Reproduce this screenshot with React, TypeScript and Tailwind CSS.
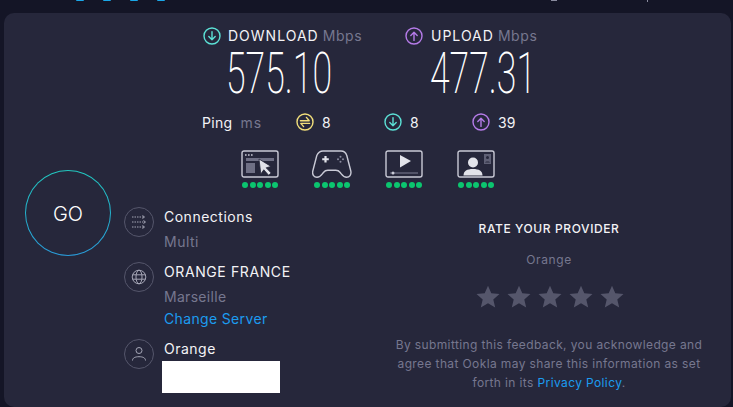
const font = "[font-family:Inter,'Noto_Sans',sans-serif]";

function ArrowBadge({ kind }: { kind: 'down' | 'up' | 'ping' }) {
  const color = kind === 'down' ? '#5ce1d6' : kind === 'up' ? '#b57be8' : '#f2df7b';
  return (
    <svg width="18" height="18" viewBox="0 0 18 18" fill="none" stroke={color} strokeWidth="1.4" strokeLinecap="round" strokeLinejoin="round" className="shrink-0">
      <circle cx="9" cy="9" r="8" />
      {kind === 'down' && <path d="M9 4.600v8.200M5.800 9.600 9 12.800l3.200-3.200" />}
      {kind === 'up' && <path d="M9 13.400V5.200M5.800 8.400 9 5.200l3.200 3.200" />}
      {kind === 'ping' && <path d="M4.400 7.800h8.800L10.400 4.400M13.600 10.400H4.800L7.600 13.600" />}
    </svg>
  );
}

function BrowsingIcon() {
  return (
    <svg width="38" height="28" viewBox="0 0 38 28" fill="none">
      <rect x="1" y="1" width="36" height="26" rx="2" stroke="#c9cad6" strokeWidth="1.4" />
      <path d="M4 5h1.600M7 5h1.600M10 5h1.600" stroke="#c9cad6" strokeWidth="1.600" />
      <rect x="5" y="8" width="28" height="3" fill="#6f7085" />
      <rect x="5" y="13" width="9" height="10" fill="#6f7085" />
      <path d="M18 9l12 7.400-4.800 1.400 5 5.200-2.600 2.200-4.800-5.400-3 4.200z" fill="#e2e3ea" stroke="#26273b" strokeWidth="0.8" />
    </svg>
  );
}

function GamingIcon() {
  return (
    <svg width="40" height="28" viewBox="0 0 40 28" fill="none">
      <path d="M11 1h18c3 0 4.800 1.500 5.800 4.500l4 15.500c.8 3.700-1.300 6.300-4.200 6.300-3.200 0-4.600-2.600-6.400-4.800-1.200-1.500-2.400-2.200-4.400-2.200h-8c-2 0-3.200.7-4.400 2.200-1.800 2.200-3.200 4.800-6.400 4.800-2.900 0-5-2.600-4.200-6.300l4-15.500C6.200 2.500 8 1 11 1z" stroke="#c9cad6" strokeWidth="1.400" />
      <path d="M13.500 6v6.500M10.200 9.250h6.600" stroke="#e2e3ea" strokeWidth="2.200" />
      <circle cx="28.500" cy="6.700" r="1" fill="#8a8b9e" />
      <circle cx="28.500" cy="11.700" r="1" fill="#8a8b9e" />
      <circle cx="26" cy="9.200" r="1" fill="#8a8b9e" />
      <circle cx="31" cy="9.200" r="1" fill="#8a8b9e" />
    </svg>
  );
}

function StreamingIcon() {
  return (
    <svg width="38" height="28" viewBox="0 0 38 28" fill="none">
      <rect x="1" y="1" width="36" height="26" rx="2" stroke="#c9cad6" strokeWidth="1.400" />
      <path d="M15 5l11 6-11 6.500z" fill="#e2e3ea" />
      <path d="M5 23h28" stroke="#6f7085" strokeWidth="1.200" />
      <circle cx="8" cy="23" r="1.500" fill="#c9cad6" />
    </svg>
  );
}

function VideoCallIcon() {
  return (
    <svg width="38" height="28" viewBox="0 0 38 28" fill="none">
      <rect x="1" y="1" width="36" height="26" rx="2" stroke="#c9cad6" strokeWidth="1.400" />
      <circle cx="16" cy="12.500" r="5" fill="#e2e3ea" />
      <path d="M6.500 25.500c0-4.500 3.500-6.500 9.500-6.500s9.500 2 9.500 6.500z" fill="#e2e3ea" />
      <rect x="27" y="4" width="7" height="10" fill="#5f6075" />
      <circle cx="30.500" cy="7.500" r="1.500" fill="#26273b" />
      <path d="M28 12.500c0-1.500 5-1.500 5 0z" fill="#26273b" />
    </svg>
  );
}

function Quality({ children, width }: { children: React.ReactNode; width: string }) {
  return (
    <div className={`flex flex-col items-center gap-[4px] ${width}`}>
      {children}
      <div className="flex gap-[1.5px]">
        {[0, 1, 2, 3, 4].map((i) => (
          <span key={i} className="h-[6px] w-[6px] rounded-full bg-[#0bc56f]"></span>
        ))}
      </div>
    </div>
  );
}

function Metric({ kind, label, value, gap, labelGap, valuePad }: { kind: 'down' | 'up'; label: string; value: string; gap: string; labelGap: string; valuePad: string }) {
  return (
    <div className={gap}>
      <div className="flex h-[18px] items-center text-[14px] leading-[18px]">
        <ArrowBadge kind={kind} />
        <span className={`${labelGap} tracking-[1px] text-[#f3f3f6]`}>{label}</span>
        <span className="ml-[4px] tracking-[0.6px] text-[#76778f]">Mbps</span>
      </div>
      <div className={`mt-[3px] h-[52px] leading-[52px] ${valuePad}`}>
        <span className="inline-block origin-left scale-x-[0.625] whitespace-nowrap text-[57px] font-extralight text-white [font-family:Roboto,sans-serif]">{value}</span>
      </div>
    </div>
  );
}

function PingValue({ kind, value }: { kind: 'down' | 'up' | 'ping'; value: string }) {
  return (
    <div className="flex w-[88px] items-center text-[14px] text-[#f3f3f6]">
      <ArrowBadge kind={kind} />
      <span className="ml-[8px]">{value}</span>
    </div>
  );
}

function InfoIcon({ kind }: { kind: 'connections' | 'globe' | 'user' }) {
  return (
    <span className="flex h-[30px] w-[30px] shrink-0 items-center justify-center rounded-full border border-[#55566b]">
      <svg width="16" height="16" viewBox="0 0 16 16" fill="none" stroke="#a5a6b6" strokeWidth="1">
        {kind === 'connections' && (
          <>
            <path d="M1 3h12M1 8h13M1 13h12" strokeDasharray="1.500 1" />
            <path d="M11.500 1.500 13.500 3l-2 1.500M12.500 6.500 14.500 8l-2 1.500M11.500 11.500l2 1.500-2 1.500" />
          </>
        )}
        {kind === 'globe' && (
          <>
            <circle cx="8" cy="8" r="6.800" />
            <ellipse cx="8" cy="8" rx="3" ry="6.800" />
            <path d="M1.500 5.800h13M1.500 10.200h13" />
          </>
        )}
        {kind === 'user' && (
          <>
            <circle cx="8" cy="4.500" r="3" />
            <path d="M1.500 14.500c0-2.500 2.500-3.800 6.500-3.800s6.500 1.300 6.500 3.800" />
          </>
        )}
      </svg>
    </span>
  );
}

function Star() {
  return (
    <svg width="24" height="24" viewBox="0 0 24 24" fill="#55566b">
      <path d="M12 .8l3.300 7.500 8.200.8-6.200 5.400 1.900 8-7.200-4.200-7.200 4.200 1.900-8L.5 9.100l8.200-.8z" />
    </svg>
  );
}

export default function App() {
  return (
    <div className={`h-[407px] w-[733px] overflow-hidden bg-[#141526] ${font}`}>
      {/* cut-off nav dots at the very top */}
      <div className="flex h-[13px] items-start pl-[76px]">
        {[0, 1, 2, 3].map((i) => (
          <span key={i} className="mr-[19px] h-px w-[8px] rounded-b-full bg-[#1aa7e8]"></span>
        ))}
        <span className="ml-[367px] h-px w-[6px] bg-[#8a8b9e]"></span>
        <span className="ml-[90px] h-[2px] w-px bg-[#8a8b9e]"></span>
      </div>

      <div className="ml-[4px] mr-[2px] flex h-[394px] rounded-[10px] bg-[#26273b]">
        <div className="w-[120px] shrink-0 pl-[21px] pt-[157px]">
          <div className="h-[86px] w-[86px] rounded-full bg-gradient-to-b from-[#22c9c0] to-[#2a9ad8] p-px">
            <div className="flex h-full w-full items-center justify-center rounded-full bg-[#26273b] pt-[2px] text-[20px] font-light text-white">GO</div>
          </div>
        </div>

        <div className="flex-1">
          <div className="flex pl-[79px] pt-[14px]">
            <Metric kind="down" label="DOWNLOAD" value="575.10" gap="w-[202px]" labelGap="ml-[7px]" valuePad="pl-[23px]" />
            <Metric kind="up" label="UPLOAD" value="477.31" gap="" labelGap="ml-[8px]" valuePad="pl-[25px]" />
          </div>

          <div className="mt-[13px] flex h-[18px] items-center pl-[78px]">
            <div className="flex w-[94px] items-center text-[14px]">
              <span className="tracking-[0.3px] text-[#f3f3f6]">Ping</span>
              <span className="ml-[8px] tracking-[1.2px] text-[#76778f]">ms</span>
            </div>
            <PingValue kind="ping" value="8" />
            <PingValue kind="down" value="8" />
            <PingValue kind="up" value="39" />
          </div>

          <div className="mt-[19px] flex pl-[117px]">
            <Quality width="w-[38px] mr-[33px]"><BrowsingIcon /></Quality>
            <Quality width="w-[40px] mr-[33px]"><GamingIcon /></Quality>
            <Quality width="w-[38px] mr-[34px]"><StreamingIcon /></Quality>
            <Quality width="w-[38px]"><VideoCallIcon /></Quality>
          </div>

          <div className="mt-[19px] flex">
            <div className="w-[252px] shrink-0 text-[14px]">
              <div className="flex gap-[10px]">
                <InfoIcon kind="connections" />
                <div>
                  <div className="leading-[20px] tracking-[0.5px] text-[#f3f3f6]">Connections</div>
                  <div className="mt-[5px] leading-[20px] tracking-[0.5px] text-[#76778f]">Multi</div>
                </div>
              </div>
              <div className="mt-[10px] flex gap-[10px]">
                <InfoIcon kind="globe" />
                <div>
                  <div className="leading-[20px] tracking-[0.6px] text-[#f3f3f6]">ORANGE FRANCE</div>
                  <div className="mt-[5px] leading-[20px] tracking-[0.3px] text-[#76778f]">Marseille</div>
                  <div className="mt-[2px] leading-[20px] tracking-[0.35px] text-[#1c9cf0]">Change Server</div>
                </div>
              </div>
              <div className="mt-[10px] flex gap-[10px]">
                <InfoIcon kind="user" />
                <div>
                  <div className="leading-[20px] tracking-[0.5px] text-[#f3f3f6]">Orange</div>
                  <div className="-ml-[2px] mt-[2px] h-[32px] w-[118px] bg-white"></div>
                </div>
              </div>
            </div>

            <div className="w-[346px] text-center">
              <div className="mt-[12px] text-[12px] font-medium leading-[20px] tracking-[0.6px] text-[#f3f3f6]">RATE YOUR PROVIDER</div>
              <div className="mt-[11px] text-[12px] leading-[20px] tracking-[0.6px] text-[#76778f]">Orange</div>
              <div className="ml-[1px] mt-[15px] flex justify-center gap-[7px]">
                {[0, 1, 2, 3, 4].map((i) => (
                  <Star key={i} />
                ))}
              </div>
              <p className="mt-[26px] text-[12px] leading-[19px] tracking-[0.38px] text-[#76778f]">
                By submitting this feedback, you acknowledge and<br />
                agree that Ookla may share this information as set<br />
                forth in its <span className="text-[#1c9cf0]">Privacy Policy</span>.
              </p>
            </div>
          </div>
        </div>
      </div>
    </div>
  );
}
